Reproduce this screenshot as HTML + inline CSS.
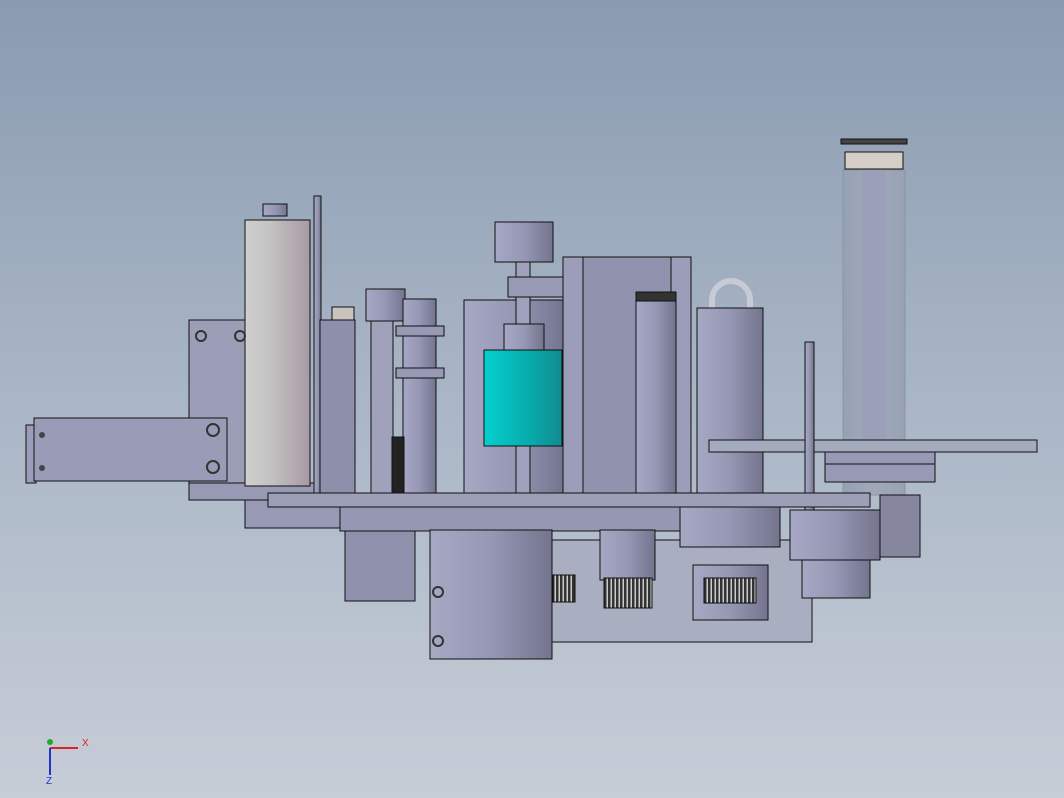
<!DOCTYPE html>
<html><head><meta charset="utf-8"><style>
html,body{margin:0;padding:0}
body{width:1064px;height:798px;overflow:hidden;background:linear-gradient(#8a9bb0,#a9b6c6 50%,#c7cdd7);}
svg{position:absolute;left:0;top:0}
</style></head><body>
<svg width="1064" height="798" viewBox="0 0 1064 798">
<defs>
<linearGradient id="cyl" x1="0" x2="1"><stop offset="0" stop-color="#a6a8c4"/><stop offset=".5" stop-color="#9597b4"/><stop offset="1" stop-color="#74748e"/></linearGradient>
<linearGradient id="white" x1="0" x2="1"><stop offset="0" stop-color="#cfcfcf"/><stop offset=".4" stop-color="#c4c2c2"/><stop offset="1" stop-color="#a69aa4"/></linearGradient>
<linearGradient id="teal" x1="0" x2="1"><stop offset="0" stop-color="#05cfcf"/><stop offset=".6" stop-color="#08aaaa"/><stop offset="1" stop-color="#128a90"/></linearGradient>
<linearGradient id="glass" x1="0" x2="1"><stop offset="0" stop-color="#95a2b4"/><stop offset=".5" stop-color="#a0a9b9"/><stop offset="1" stop-color="#98a2b4"/></linearGradient>
<pattern id="gear" width="4" height="10" patternUnits="userSpaceOnUse"><rect width="4" height="10" fill="#ccc"/><rect width="2.5" height="10" fill="#333"/></pattern>
</defs>
<g stroke="#111" stroke-width="1" fill="#9899b5">
<rect x="189" y="320" width="70" height="180" fill="#9c9db6"/>
<rect x="26" y="425" width="10" height="58" fill="#9c9db6"/>
<rect x="34" y="418" width="193" height="63" fill="#9a9bb6"/>
<rect x="189" y="483" width="140" height="17"/>
<rect x="245" y="500" width="100" height="28"/>
<rect x="263" y="204" width="24" height="12" fill="url(#cyl)"/>
<rect x="245" y="220" width="65" height="266" fill="url(#white)"/>
<rect x="314" y="196" width="7" height="300" fill="url(#cyl)"/>
<rect x="320" y="320" width="35" height="175" fill="#8e8fab"/>
<rect x="332" y="307" width="22" height="13" fill="#cac4bd"/>
<rect x="371" y="320" width="22" height="175" fill="#a0a1bb"/>
<rect x="366" y="289" width="39" height="32" fill="url(#cyl)"/>
<rect x="403" y="299" width="33" height="196" fill="url(#cyl)"/>
<rect x="396" y="326" width="48" height="10"/>
<rect x="396" y="368" width="48" height="10"/>
<rect x="392" y="437" width="12" height="57" fill="#222"/>
<rect x="464" y="300" width="100" height="195" fill="url(#cyl)"/>
<rect x="495" y="222" width="58" height="40" fill="url(#cyl)"/>
<rect x="516" y="262" width="14" height="233" fill="#9fa1bd"/>
<rect x="508" y="277" width="58" height="20"/>
<rect x="504" y="324" width="40" height="26" fill="url(#cyl)"/>
<rect x="484" y="350" width="78" height="96" fill="url(#teal)"/>
<rect x="563" y="257" width="128" height="236" fill="#9192ae"/>
<rect x="563" y="257" width="20" height="236" fill="#9c9db8"/>
<rect x="671" y="257" width="20" height="236" fill="#9c9db8"/>
<rect x="636" y="293" width="40" height="200" fill="url(#cyl)"/>
<rect x="636" y="292" width="40" height="9" fill="#333"/>
<path d="M712 308 V300 A18 18 0 0 1 750 300 V308" fill="none" stroke="#c8cad6" stroke-width="6"/>
<rect x="697" y="308" width="66" height="186" fill="url(#cyl)"/>
<rect x="843" y="170" width="62" height="325" fill="url(#glass)" stroke="#8a94a6"/>
<rect x="862" y="170" width="24" height="280" fill="#9c9fb8" stroke="none"/>
<rect x="841" y="139" width="66" height="5" fill="#444"/>
<rect x="845" y="152" width="58" height="17" fill="#d4cec6"/>
<rect x="709" y="440" width="328" height="12" fill="#a4abbc"/>
<rect x="825" y="452" width="110" height="12"/>
<rect x="825" y="464" width="110" height="18"/>
<rect x="805" y="342" width="9" height="170" fill="url(#cyl)"/>
<rect x="268" y="493" width="602" height="14" fill="#9d9eb8"/>
<rect x="552" y="540" width="260" height="102" fill="#a9afc0"/>
<rect x="340" y="507" width="400" height="24" fill="#9697b3"/>
<rect x="345" y="531" width="70" height="70" fill="#8f90ac"/>
<rect x="430" y="530" width="122" height="129" fill="url(#cyl)"/>
<rect x="600" y="530" width="55" height="50" fill="url(#cyl)"/>
<rect x="604" y="578" width="48" height="30" fill="url(#gear)"/>
<rect x="553" y="575" width="22" height="27" fill="url(#gear)"/>
<rect x="693" y="565" width="75" height="55" fill="url(#cyl)"/>
<rect x="704" y="578" width="52" height="25" fill="url(#gear)"/>
<rect x="790" y="510" width="90" height="50" fill="url(#cyl)"/>
<rect x="880" y="495" width="40" height="62" fill="#86869f"/>
<rect x="802" y="560" width="68" height="38" fill="url(#cyl)"/>
<rect x="680" y="507" width="100" height="40" fill="url(#cyl)"/>
</g>
<g fill="#444"><circle cx="42" cy="435" r="3"/><circle cx="42" cy="468" r="3"/><circle cx="213" cy="430" r="6" fill="none" stroke="#333" stroke-width="2"/><circle cx="213" cy="467" r="6" fill="none" stroke="#333" stroke-width="2"/><circle cx="201" cy="336" r="5" fill="none" stroke="#333" stroke-width="2"/><circle cx="240" cy="336" r="5" fill="none" stroke="#333" stroke-width="2"/><circle cx="438" cy="592" r="5" fill="none" stroke="#333" stroke-width="2"/><circle cx="438" cy="641" r="5" fill="none" stroke="#333" stroke-width="2"/></g>
<g font-family="Liberation Sans, sans-serif" font-size="10">
<path d="M50 748 L78 748" stroke="#d22" stroke-width="2"/><path d="M50 748 L50 775" stroke="#23c" stroke-width="2"/>
<circle cx="50" cy="742" r="3" fill="#2a2"/>
<text x="82" y="746" fill="#d22">X</text><text x="46" y="784" fill="#23c">Z</text>
</g>
</svg>
</body></html>
